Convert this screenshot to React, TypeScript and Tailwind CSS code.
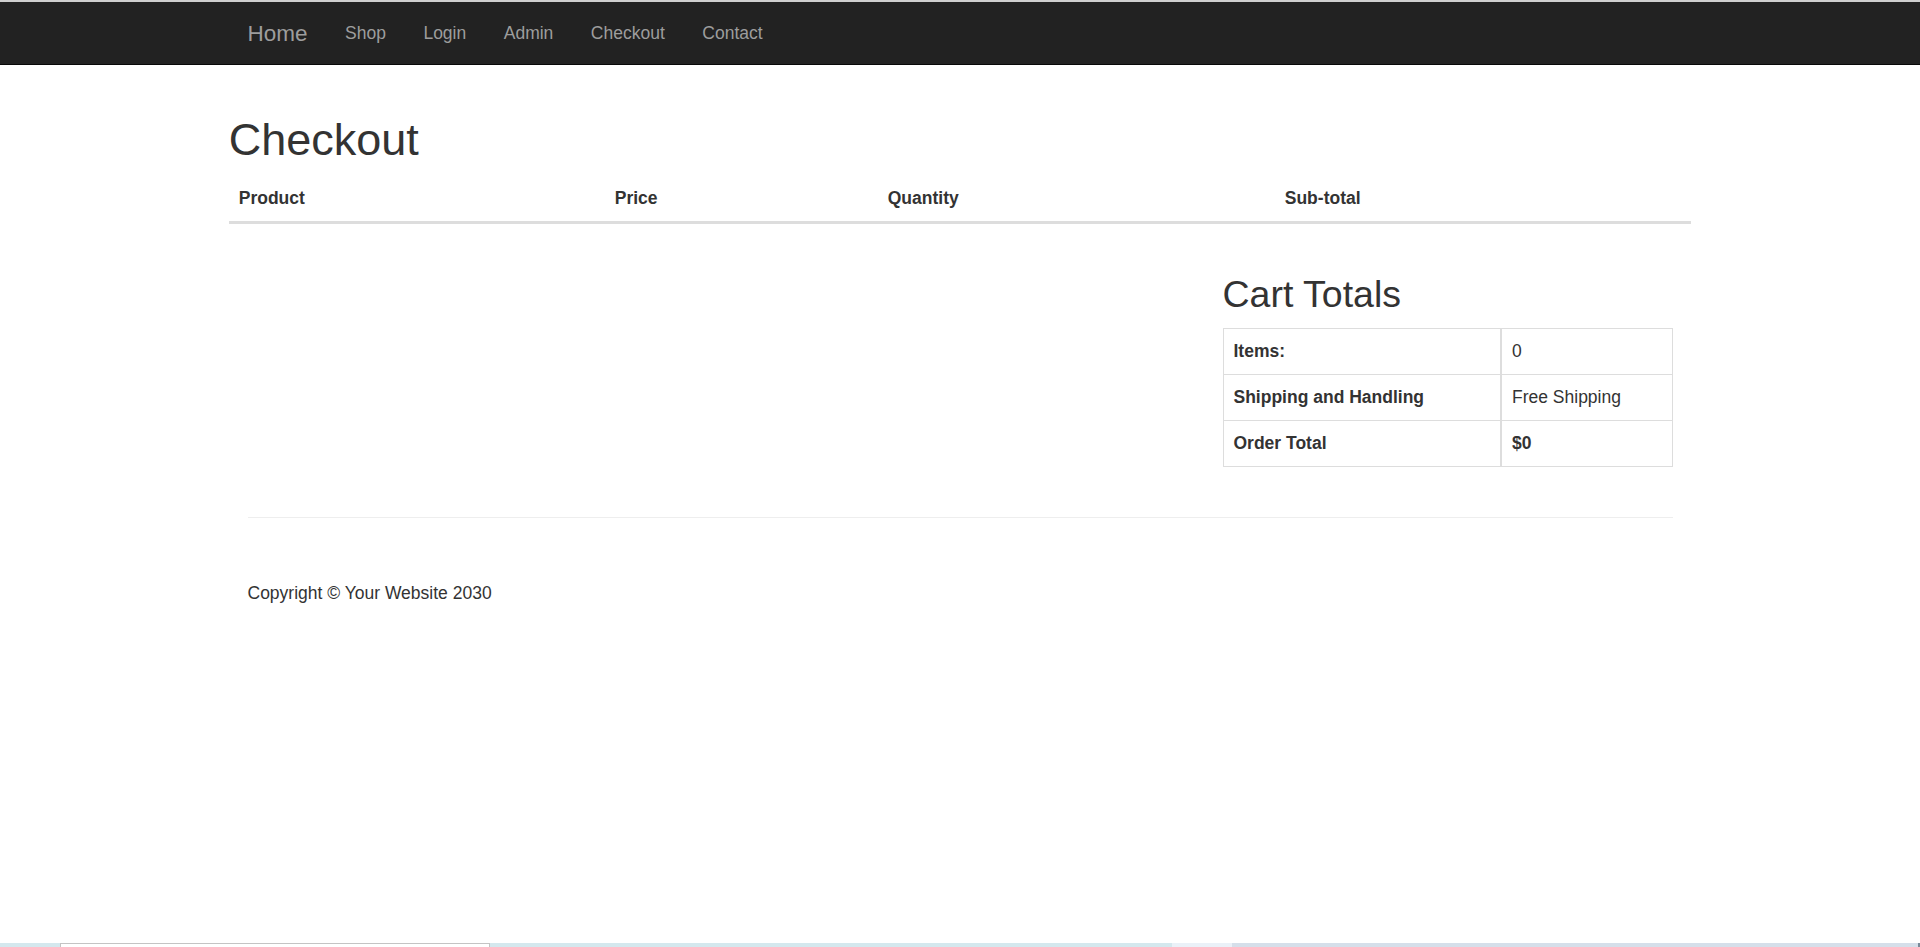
// Checkout page – Bootstrap-style layout rendered at 125% scale

const NAV_LINKS = ["Shop", "Login", "Admin", "Checkout", "Contact"];

const HEAD_COLUMNS = [
  { label: "Product", width: "w-[376px]" },
  { label: "Price", width: "w-[273px]" },
  { label: "Quantity", width: "w-[397px]" },
  { label: "Sub-total", width: "" },
];

function Navbar() {
  return (
    <div className="border-t-2 border-[#cfcfcf]">
      <nav className="h-[63px] bg-[#222222] border-b border-[#080808]">
        <div className="mx-auto w-[1462.5px] h-full flex items-center">
          <a className="px-[18.75px] text-[22.5px] text-[#9d9d9d] leading-[25px]">Home</a>
          <ul className="flex items-center">
            {NAV_LINKS.map((link) => (
              <li key={link}>
                <a className="block px-[18.75px] text-[17.5px] text-[#9d9d9d] leading-[25px]">
                  {link}
                </a>
              </li>
            ))}
          </ul>
        </div>
      </nav>
    </div>
  );
}

function CartTable() {
  return (
    <table className="w-full border-collapse mb-[25px]">
      <thead>
        <tr>
          {HEAD_COLUMNS.map((col) => (
            <th
              key={col.label}
              className={`${col.width} text-left font-bold px-[10px] pt-[9px] pb-[10px] leading-[25px] text-[17.5px] border-b-[3px] border-[#dddddd]`}
            >
              {col.label}
            </th>
          ))}
        </tr>
      </thead>
      <tbody />
    </table>
  );
}

function CartTotals() {
  const rows = [
    { label: "Items:", value: "0", bold: false },
    { label: "Shipping and Handling", value: "Free Shipping", bold: false },
    { label: "Order Total", value: "$0", bold: true },
  ];

  return (
    <div className="flex justify-end pr-[18.75px]">
      <div className="w-[450px]">
        <h2 className="text-[37.5px] leading-[41.25px] mt-[25px] mb-[12.5px]">Cart Totals</h2>
        <table className="w-full border-collapse border border-[#dddddd] mb-[25px]">
          <tbody>
            {rows.map((row) => (
              <tr key={row.label}>
                <th className="w-[278px] text-left font-bold p-[10px] leading-[25px] border border-[#dddddd] border-r-2">
                  {row.label}
                </th>
                <td
                  className={`p-[10px] leading-[25px] border border-[#dddddd] ${
                    row.bold ? "font-bold" : ""
                  }`}
                >
                  {row.value}
                </td>
              </tr>
            ))}
          </tbody>
        </table>
      </div>
    </div>
  );
}

function Footer() {
  return (
    <div className="px-[18.75px]">
      <hr className="mt-[25px] mb-[25px] border-0 border-t border-[#eeeeee]" />
      <footer className="pt-[38px]">
        <p className="leading-[25px]">Copyright © Your Website 2030</p>
      </footer>
    </div>
  );
}

// thin taskbar-like strip at the very bottom of the window
function BottomStrip() {
  return (
    <div className="mt-auto h-[4px] flex">
      <div className="w-[60px] bg-[#d4e8ee]" />
      <div className="w-[430px] bg-white border-t border-x border-[#c4c4c4]" />
      <div className="w-[682px] bg-[#d4e8ee]" />
      <div className="w-[60px] bg-[#eaf1f8]" />
      <div className="flex-1 bg-[#d5dfea] border-r-2 border-[#7a8a99]" />
    </div>
  );
}

export default function App() {
  return (
    <div className="min-h-[947px] flex flex-col bg-white text-[#333333] text-[17.5px] font-['Liberation_Sans',Arial,sans-serif]">
      <Navbar />
      <main className="mx-auto w-[1462.5px] pt-[25px]">
        <h1 className="text-[45px] leading-[49.5px] mt-[25px] mb-[12.5px]">Checkout</h1>
        <CartTable />
        <CartTotals />
        <Footer />
      </main>
      <BottomStrip />
    </div>
  );
}
